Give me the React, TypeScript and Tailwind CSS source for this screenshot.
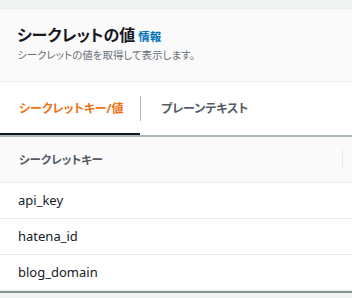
import React from 'react';

const rows = ['api_key', 'hatena_id', 'blog_domain'];

export default function App() {
  return (
    <div
      className="h-[298px] w-[352px] overflow-hidden bg-[#f2f3f3] [font-feature-settings:'palt']"
      style={{ fontFamily: '"Noto Sans", "Noto Sans CJK JP", sans-serif' }}
    >
      <div className="mt-[8px] border-t border-[#eaeded] bg-white">
        <div className="h-[73px] border-b border-[#eaeded] bg-[#fafafa] px-[17px] pt-[15px]">
          <div className="flex items-baseline gap-[3px]">
            <h2 className="text-[16px] font-bold leading-[22px] text-[#16191f]">シークレットの値</h2>
            <span className="text-[11.5px] font-bold text-[#0073bb]">情報</span>
          </div>
          <p className="mt-[1px] text-[10.5px] leading-[16px] text-[#687078]">シークレットの値を取得して表示します。</p>
        </div>
        <div className="flex h-[55px] items-stretch border-b-2 border-[#aab7b8]">
          <div className="relative flex w-[140px] items-center pl-[19px]">
            <span className="whitespace-nowrap text-[12px] font-bold text-[#ec7211]">シークレットキー/値</span>
            <div className="absolute bottom-0 left-0 right-0 h-[2px] bg-[#16191f]" />
          </div>
          <div className="my-[14px] w-px bg-[#aab7b8]" />
          <div className="flex items-center pl-[20px]">
            <span className="whitespace-nowrap text-[12px] font-bold text-[#545b64]">プレーンテキスト</span>
          </div>
        </div>
        <div className="flex h-[46px] items-center justify-between border-b border-[#eaeded] bg-[#fafafa] pl-[19px] pr-[9px]">
          <span className="text-[11.5px] font-bold text-[#545b64]">シークレットキー</span>
          <div className="h-[21px] w-px bg-[#eaeded]" />
        </div>
        {rows.map((r) => (
          <div key={r} className="flex h-[36px] items-center border-b border-[#eaeded] pl-[18px]">
            <span className="text-[13px] text-[#16191f]">{r}</span>
          </div>
        ))}
        <div className="h-[2px] bg-[#879596]" />
      </div>
    </div>
  );
}
